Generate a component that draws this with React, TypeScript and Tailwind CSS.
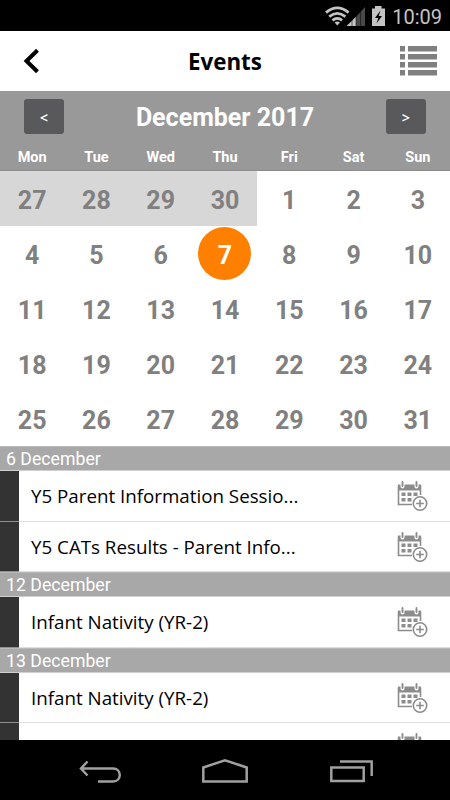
import React from "react";

const weekDays = ["Mon", "Tue", "Wed", "Thu", "Fri", "Sat", "Sun"];

const days = [27, 28, 29, 30, ...Array.from({ length: 31 }, (_, i) => i + 1)];

const StatusBar = () => {
  return (
    <div className="flex h-[31px] shrink-0 items-center justify-end bg-black pr-[8px]">
      <svg width="60" height="20" viewBox="0 0 60 20" className="mr-[7px]">
        <g fill="none" stroke="#c4c4c4" strokeWidth="2.8">
          <path d="M1 6.6Q12.3 -2.8 23.6 6.6" />
          <path d="M4.2 10.6Q12.3 4.2 20.4 10.6" />
          <path d="M7.5 14.3Q12.3 10.4 17.1 14.3" />
        </g>
        <path d="M9.6 16.4Q12.3 14.6 15 16.4L12.3 19.4Z" fill="#c4c4c4" />
        <path d="M21.5 20L31 10.8V20Z" fill="#c4c4c4" />
        <path d="M31 10.8L40 1V20H31Z" fill="#494949" />
        <path
          d="M27 14V20M31 10V20M35.5 6V20"
          stroke="#000"
          strokeWidth="0.5"
        />
        <path d="M50 0H56.5V2.5H60V20H47V2.5H50Z" fill="#c4c4c4" />
        <path d="M55.5 4.5L50 12H53.3L51.5 17.5L57 10H53.7Z" fill="#000" />
      </svg>
      <span className="pt-[3px] font-['Roboto',sans-serif] text-[20px] leading-[28px] text-[#c4c4c4]">
        10:09
      </span>
    </div>
  );
};

const Header = () => {
  return (
    <header className="flex h-[60px] shrink-0 items-center justify-between bg-white pr-[13px] pl-[23px]">
      <svg width="37" height="26" viewBox="0 0 37 26">
        <path
          d="M14.5 2.3L3.5 13L14.5 23.7"
          fill="none"
          stroke="#000"
          strokeWidth="4"
        />
      </svg>
      <h1 className="pt-[2px] pr-[10px] font-['Open_Sans',sans-serif] text-[22.3px] leading-[30px] font-bold text-black">
        Events
      </h1>
      <svg width="37" height="30" viewBox="0 0 37 30" fill="#808080">
        <path d="M0 0H5V5.5H0ZM0 8H5V13.5H0ZM0 16H5V21.5H0ZM0 24H5V29.5H0Z" />
        <path d="M8 0H37V5.5H8ZM8 8H37V13.5H8ZM8 16H37V21.5H8ZM8 24H37V29.5H8Z" />
      </svg>
    </header>
  );
};

const MonthButton = ({ label }: { label: string }) => {
  return (
    <button className="h-[35px] w-10 rounded-[3px] bg-[#59595b] pt-[2px] font-['Open_Sans',sans-serif] text-[14.5px] font-semibold text-white">
      {label}
    </button>
  );
};

const Calendar = () => {
  return (
    <section className="shrink-0 font-['Roboto',sans-serif] font-bold">
      <div className="h-20 border-b border-[#8c8c8c] bg-[#999999] pt-[8px] text-white">
        <div className="flex items-center justify-between px-6">
          <MonthButton label="<" />
          <h2 className="pt-[2px] text-[25px] leading-[33px]">December 2017</h2>
          <MonthButton label=">" />
        </div>
        <div className="mt-[13px] grid grid-cols-7 text-center text-[14.5px] leading-[22px]">
          {weekDays.map((day) => (
            <span key={day}>{day}</span>
          ))}
        </div>
      </div>
      <div className="grid grid-cols-7 text-[25px] text-[#808080]">
        {days.map((day, i) => (
          <div
            key={i}
            className={`flex h-[55px] items-center justify-center pt-[4px] ${i < 4 ? "bg-[#d7d7d7]" : "bg-white"}`}
          >
            {i === 10 ? (
              <span className="-mt-[4px] flex h-[53px] w-[53px] items-center justify-center rounded-full bg-[#ff8000] pt-[4px] text-white">
                {day}
              </span>
            ) : (
              <span>{day}</span>
            )}
          </div>
        ))}
      </div>
    </section>
  );
};

const AddToCalendar = () => {
  return (
    <svg width="32" height="32" viewBox="0 0 32 32" className="shrink-0">
      <path
        d="M1.5 4.5V23.5H15M23.5 4.5V14"
        fill="none"
        stroke="#8c8c8c"
        strokeWidth="1.6"
      />
      <path d="M1 3.5H24V9.5H1Z" fill="#8c8c8c" />
      <path
        d="M5.5 0V5.5M19.5 0V5.5"
        stroke="#fff"
        strokeWidth="4"
        strokeLinecap="round"
      />
      <path
        d="M5.5 1V5M19.5 1V5"
        stroke="#8c8c8c"
        strokeWidth="1.9"
        strokeLinecap="round"
      />
      <path
        d="M4.5 11.5H8.5V15H4.5ZM10.5 11.5H14.5V15H10.5ZM16.5 11.5H20.5V15H16.5ZM4.5 17H8.5V20.5H4.5ZM10.5 17H14.5V20.5H10.5Z"
        fill="#8c8c8c"
      />
      <circle cx="23" cy="22.5" r="8" fill="#fff" />
      <circle
        cx="23"
        cy="22.5"
        r="6.7"
        fill="none"
        stroke="#8c8c8c"
        strokeWidth="1.6"
      />
      <path d="M23 18.7V26.3M19.2 22.5H26.8" stroke="#8c8c8c" strokeWidth="1.6" />
    </svg>
  );
};

const DateBar = ({ title }: { title: string }) => {
  return (
    <div className="h-[25px] shrink-0 border-y border-t-[#b9b9b9] border-b-[#d0d0d0] bg-[#a8a8a8] pl-[6px] font-['Roboto',sans-serif] text-[17.7px] leading-[25px] text-white">
      {title}
    </div>
  );
};

const EventRow = ({
  title,
  size = "h-[51px]",
}: {
  title: string;
  size?: string;
}) => {
  return (
    <div className={`flex shrink-0 bg-white ${size}`}>
      <div className="w-[19px] border-b border-[#909090] bg-[#333333]"></div>
      <div className="flex flex-1 items-start justify-between border-b border-[#dedede] pr-[21px] pl-[12px]">
        <p className="pt-[11px] font-['Open_Sans',sans-serif] text-[18.75px] leading-[28px] text-black">
          {title}
        </p>
        <div className="pt-[10px]">
          <AddToCalendar />
        </div>
      </div>
    </div>
  );
};

const NavBar = () => {
  return (
    <nav className="flex h-[60px] shrink-0 items-center justify-between bg-black pt-[2px] pr-[77px] pl-[79px]">
      <svg width="42" height="24" viewBox="0 0 42 24">
        <path
          d="M1.5 9.5H34C43 9.5 43 22.5 34 22.5H19M8.5 2.5L2 9.5L8.5 16.5"
          fill="none"
          stroke="#a0a0a0"
          strokeWidth="2.5"
        />
      </svg>
      <svg width="46" height="26" viewBox="0 0 46 26" className="mr-px">
        <path
          d="M1.3 9.5L23 2.2L44.7 9.5V23.5H1.3Z"
          fill="none"
          stroke="#a0a0a0"
          strokeWidth="2.5"
        />
      </svg>
      <svg width="43" height="24" viewBox="0 0 43 24">
        <path
          d="M1.3 8.5H33.7V22H1.3ZM10 2.5H41.7V17"
          fill="none"
          stroke="#a0a0a0"
          strokeWidth="2.5"
        />
      </svg>
    </nav>
  );
};

const App = () => {
  return (
    <main className="flex h-[800px] w-[450px] flex-col overflow-hidden bg-white">
      <StatusBar />
      <Header />
      <Calendar />
      <div className="flex min-h-0 flex-1 flex-col overflow-hidden">
        <DateBar title="6 December" />
        <EventRow title="Y5 Parent Information Sessio..." />
        <EventRow title="Y5 CATs Results - Parent Info..." size="h-[50px]" />
        <DateBar title="12 December" />
        <EventRow title="Infant Nativity (YR-2)" />
        <DateBar title="13 December" />
        <EventRow title="Infant Nativity (YR-2)" size="h-[50px]" />
        <EventRow title="" />
      </div>
      <NavBar />
    </main>
  );
};

export default App;
